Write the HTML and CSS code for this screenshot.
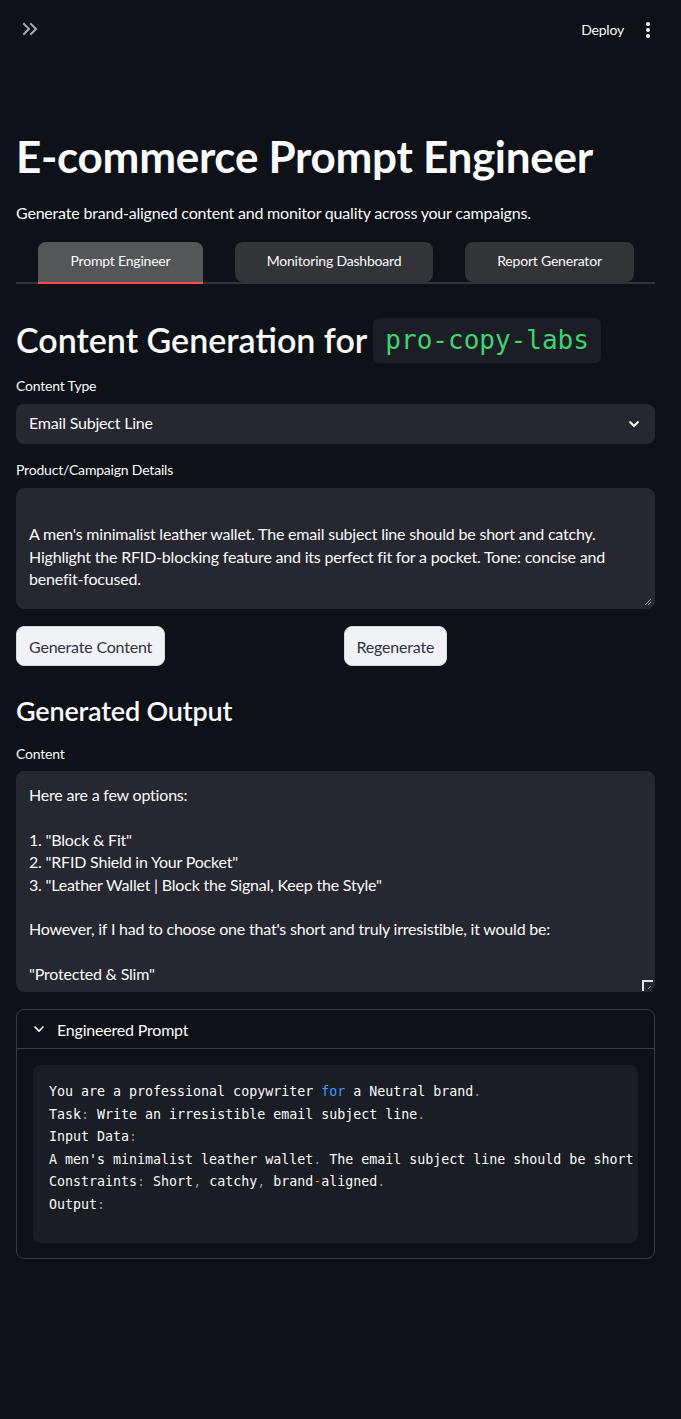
FILE: index.html
```html
<!DOCTYPE html>
<html lang="en">
<head>
<meta charset="utf-8">
<title>E-commerce Prompt Engineer</title>
<link rel="stylesheet" href="styles.css">
</head>
<body>
<header class="topbar">
  <button class="icon-btn sidebar-toggle" aria-label="Open sidebar">
    <svg width="18" height="14" viewBox="0 0 18 14"><path d="M2 2l5 5-5 5M9 2l5 5-5 5" fill="none" stroke="#a3a8b4" stroke-width="2" stroke-linecap="square"/></svg>
  </button>
  <div class="topbar-right">
    <span class="deploy">Deploy</span>
    <span class="kebab"><i></i><i></i><i></i></span>
  </div>
</header>

<main class="main">
  <h1 class="title">E-commerce Prompt Engineer</h1>
  <p class="subtitle">Generate brand-aligned content and monitor quality across your campaigns.</p>

  <nav class="tabs">
    <div class="tab tab-active">Prompt Engineer</div>
    <div class="tab tab-2">Monitoring Dashboard</div>
    <div class="tab tab-3">Report Generator</div>
  </nav>

  <h2 class="h2">Content Generation for <code class="badge">pro-copy-labs</code></h2>

  <label class="label">Content Type</label>
  <div class="select">
    <span>Email Subject Line</span>
    <svg width="12" height="8" viewBox="0 0 12 8"><path d="M1.5 1.5l4.5 4.5 4.5-4.5" fill="none" stroke="#fafafa" stroke-width="2"/></svg>
  </div>

  <label class="label label-2">Product/Campaign Details</label>
  <div class="textarea ta-details">
    <div class="ta-text">&nbsp;<br>A men's minimalist leather wallet. The email subject line should be short and catchy. Highlight the RFID-blocking feature and its perfect fit for a pocket. Tone: concise and benefit-focused.</div>
    <svg class="grip" width="8" height="8" viewBox="0 0 8 8"><path d="M7 1L1 7M7 4L4 7" stroke="#9a9ca6" stroke-width="1"/></svg>
  </div>

  <div class="btn-row">
    <div class="col"><button class="btn">Generate Content</button></div>
    <div class="col"><button class="btn">Regenerate</button></div>
  </div>

  <h3 class="h3">Generated Output</h3>

  <label class="label label-3">Content</label>
  <div class="textarea ta-output">
    <div class="ta-text">Here are a few options:<br><br>1. "Block &amp; Fit"<br>2. "RFID Shield in Your Pocket"<br>3. "Leather Wallet | Block the Signal, Keep the Style"<br><br>However, if I had to choose one that's short and truly irresistible, it would be:<br><br>"Protected &amp; Slim"</div>
    <svg class="corner" width="11" height="11" viewBox="0 0 11 11"><path d="M1 11V1h10" fill="none" stroke="#e6e6e6" stroke-width="2"/><path d="M9 6L6 9" stroke="#9a9ca6" stroke-width="1"/></svg>
  </div>

  <section class="expander">
    <div class="exp-head">
      <svg width="12" height="8" viewBox="0 0 12 8"><path d="M1.5 1.5l4.5 4.5 4.5-4.5" fill="none" stroke="#fafafa" stroke-width="1.6"/></svg>
      <span>Engineered Prompt</span>
    </div>
    <div class="exp-body">
      <pre class="code"><code>You are a professional copywriter <span class="kw">for</span> a Neutral brand<span class="p">.</span>
Task<span class="p">:</span> Write an irresistible email subject line<span class="p">.</span>
Input Data<span class="p">:</span>
A men's minimalist leather wallet<span class="p">.</span> The email subject line should be short
Constraints<span class="p">:</span> Short<span class="p">,</span> catchy<span class="p">,</span> brand<span class="op">-</span>aligned<span class="p">.</span>
Output<span class="p">:</span></code></pre>
    </div>
  </section>
</main>
</body>
</html>
```

FILE: styles.css
```css
* { box-sizing: border-box; }

html, body {
  margin: 0;
  padding: 0;
  background: #0e1117;
  color: #fafafa;
  font-family: "Lato", "Liberation Sans", sans-serif;
  letter-spacing: -0.2px;
}

body { min-height: 1419px; }

.topbar {
  height: 58px;
  display: flex;
  align-items: center;
  justify-content: space-between;
  padding: 0 31px 0 22px;
}

.icon-btn {
  background: none;
  border: 0;
  padding: 0;
  display: flex;
  align-items: center;
}

.topbar-right {
  display: flex;
  align-items: center;
  gap: 22px;
}

.deploy {
  font-size: 14px;
  color: #fafafa;
}

.kebab {
  display: flex;
  flex-direction: column;
  gap: 2px;
  padding-top: 1px;
}

.kebab i {
  display: block;
  width: 4px;
  height: 4px;
  border-radius: 50%;
  background: #fafafa;
}

.main {
  padding: 0 26px 0 16px;
}

.title {
  margin: 72px 0 0;
  font-size: 44px;
  line-height: 52px;
  font-weight: 700;
  letter-spacing: -0.3px;
}

.subtitle {
  margin: 19px 0 0;
  font-size: 16px;
  line-height: 24px;
}

.tabs {
  margin-top: 17px;
  display: flex;
  gap: 32px;
  padding-left: 22px;
  border-bottom: 2px solid #31333a;
  height: 42px;
}

.tab {
  height: 40px;
  padding: 0 0 3px;
  white-space: nowrap;
  display: flex;
  align-items: center;
  justify-content: center;
  background: #333438;
  border-radius: 8px;
  font-size: 14px;
  color: #fafafa;
}

.tab-2 { width: 198px; }
.tab-3 { width: 169px; }

.tab-active {
  width: 165px;
  background: #555657;
  box-shadow: 0 2px 0 #ff4b4b;
  border-radius: 8px 8px 0 0;
}

.h2 {
  margin: 33px 0 0;
  font-size: 34px;
  line-height: 46px;
  font-weight: 600;
  letter-spacing: 0;
  display: flex;
  align-items: center;
  gap: 6px;
}

.badge {
  font-family: "DejaVu Sans Mono", "Liberation Mono", monospace;
  font-size: 26px;
  font-weight: 400;
  line-height: 45px;
  height: 45px;
  padding: 0 12px;
  background: #1c1e26;
  color: #3dd56d;
  border-radius: 6px;
}

.label {
  display: block;
  font-size: 14px;
  line-height: 20px;
  margin-top: 13px;
  margin-bottom: 8px;
}

.select {
  height: 40px;
  background: #262730;
  border-radius: 8px;
  display: flex;
  align-items: center;
  justify-content: space-between;
  padding: 0 15px 0 13px;
  font-size: 16px;
  line-height: 20px;
}

.select span { margin-top: -3px; }

.label-2 { margin-top: 16px; }

.textarea {
  position: relative;
  background: #262730;
  border: 1px solid #262730;
  border-radius: 8px;
  padding: 12px 12px;
  font-size: 16px;
  line-height: 22.4px;
  overflow: hidden;
}

.ta-details { height: 121px; }
.ta-output { height: 221px; }

.ta-text { color: #fafafa; }

.grip {
  position: absolute;
  right: 2px;
  bottom: 2px;
}

.corner {
  position: absolute;
  right: 1px;
  bottom: 0;
  background: #262730;
}

.btn-row {
  margin-top: 17px;
  display: grid;
  grid-template-columns: 1fr 1fr;
  gap: 16px;
}

.btn {
  height: 40px;
  padding: 0 12px;
  background: #f0f2f6;
  border: 1px solid #d6d8de;
  border-radius: 8px;
  font-family: inherit;
  font-size: 16px;
  letter-spacing: -0.2px;
  color: #31333f;
}

.h3 {
  margin: 27px 0 0;
  font-size: 27px;
  line-height: 36px;
  font-weight: 600;
}

.label-3 {
  margin-top: 15px;
  margin-bottom: 7px;
}

.expander {
  margin-top: 17px;
  border: 1px solid #3a3c44;
  border-radius: 8px;
  height: 250px;
}

.exp-head {
  height: 39px;
  display: flex;
  align-items: center;
  gap: 12px;
  padding-left: 16px;
  font-size: 16px;
  border-bottom: 1px solid #3a3c44;
}

.exp-body {
  padding: 16px 16px;
}

.code {
  margin: 0;
  background: #1b1d25;
  border-radius: 8px;
  height: 178px;
  padding: 16px 0 0 16px;
  overflow: hidden;
  font-family: "DejaVu Sans Mono", "Liberation Mono", monospace;
  font-size: 13.3px;
  line-height: 22.5px;
  letter-spacing: 0;
  color: #fafafa;
  white-space: pre;
}

.kw { color: #3b9cff; }
.p { color: #8f929b; }
.op { color: #ff8c1a; }
```
